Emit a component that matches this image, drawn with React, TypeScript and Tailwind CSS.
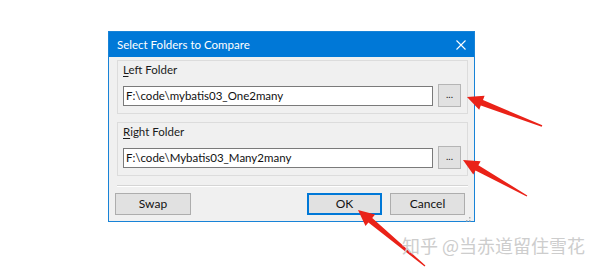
const arrows = [
  { tip: [467, 97], tail: [542, 126] },
  { tip: [463, 160], tail: [527, 196] },
  { tip: [358, 210], tail: [425, 266] },
];

function arrowPoints(tip: number[], tail: number[]) {
  const [tx, ty] = tip;
  const dx = tail[0] - tx;
  const dy = tail[1] - ty;
  const len = Math.hypot(dx, dy);
  const ux = dx / len;
  const uy = dy / len;
  const nx = -uy;
  const ny = ux;
  const head = 16;
  const hw = 7.5;
  const sw = 3;
  const tw = 0.7;
  const bx = tx + ux * head;
  const by = ty + uy * head;
  const pts = [
    [tx, ty],
    [bx + nx * hw, by + ny * hw],
    [bx + nx * sw, by + ny * sw],
    [tail[0] + nx * tw, tail[1] + ny * tw],
    [tail[0] - nx * tw, tail[1] - ny * tw],
    [bx - nx * sw, by - ny * sw],
    [bx - nx * hw, by - ny * hw],
  ];
  return pts.map((p) => p.map((v) => v.toFixed(1)).join(",")).join(" ");
}

function FolderGroup({ accessKey, rest, path }: { accessKey: string; rest: string; path: string }) {
  return (
    <div className="border border-[#dcdcdc] pl-[5px] pr-[6px] pt-[1px] pb-[6px]">
      <div className="h-[16px] text-[11.5px] leading-[16px] text-[#1a1a1a]">
        <span className="underline underline-offset-2">{accessKey}</span>
        {rest}
      </div>
      <div className="mt-[6px] flex items-center gap-[5px]">
        <div className="h-[20px] w-[310px] border border-[#7a7a7a] bg-white px-[2px] text-[11.5px] leading-[18px] text-[#111]">
          {path}
        </div>
        <button className="flex h-[23px] w-[23px] items-center justify-center border border-[#b5b5b5] bg-[#e1e1e1] pb-[3px] text-[10px] text-[#222]">
          ...
        </button>
      </div>
    </div>
  );
}

export default function App() {
  return (
    <div
      className="relative h-[270px] w-[600px] overflow-hidden bg-white pl-[108px] pt-[31px] text-[12px]"
      style={{ fontFamily: 'Lato, "Noto Sans", sans-serif' }}
    >
      <div className="flex w-[367px] flex-col border border-[#1883d7] bg-[#f0f0f0]">
        <div className="flex h-[25px] items-center justify-between bg-[#0078d7] pl-[8px] pr-[8px] text-[11.5px] text-white">
          <span>Select Folders to Compare</span>
          <svg width="10" height="10" viewBox="0 0 10 10" stroke="white" strokeWidth="1.1">
            <path d="M0.5 0.5 L9.5 9.5 M9.5 0.5 L0.5 9.5" />
          </svg>
        </div>
        <div className="flex flex-col pl-[8px] pr-[6px] pt-[3px]">
          <FolderGroup accessKey="L" rest="eft Folder" path="F:\code\mybatis03_One2many" />
          <div className="mt-[8px]">
            <FolderGroup accessKey="R" rest="ight Folder" path="F:\code\Mybatis03_Many2many" />
          </div>
          <div className="mt-[9px] border-t border-b border-t-[#d5d5d5] border-b-white" />
          <div className="mt-[6px] flex justify-between pr-[3px] pb-[6px]">
            <button className="-ml-[2px] h-[22px] w-[76px] border border-[#adadad] bg-[#e1e1e1] text-[#111]">
              Swap
            </button>
            <div className="flex gap-[8px]">
              <button className="h-[22px] w-[75px] border-2 border-[#0078d7] bg-[#e1e1e1] text-[#111]">
                OK
              </button>
              <button className="h-[22px] w-[75px] border border-[#adadad] bg-[#e1e1e1] text-[#111]">
                Cancel
              </button>
            </div>
          </div>
        </div>
      </div>

      <svg className="absolute left-0 top-0" width="600" height="270" viewBox="0 0 600 270">
        {arrows.map((a, i) => (
          <polygon key={i} points={arrowPoints(a.tip, a.tail)} fill="#ea2218" />
        ))}
        <g fill="#b0b0b0">
          <rect x="469" y="220" width="1.5" height="1.5" />
          <rect x="466" y="220" width="1.5" height="1.5" />
          <rect x="469" y="217" width="1.5" height="1.5" />
        </g>
      </svg>

      <div
        className="absolute left-[402px] top-[232px] text-[18px] text-[#cdcdcd]"
        style={{ fontFamily: '"Noto Sans CJK SC", sans-serif' }}
      >
        知乎 @当赤道留住雪花
      </div>
    </div>
  );
}
